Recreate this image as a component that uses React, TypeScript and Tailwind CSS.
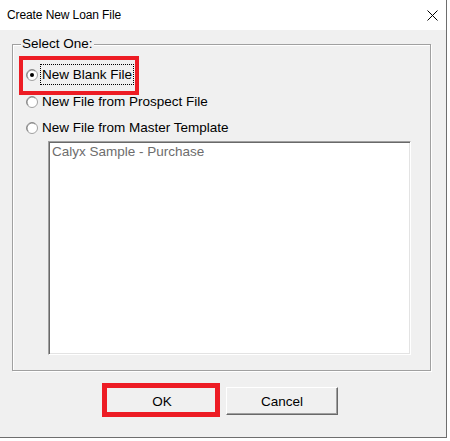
const Radio = ({ checked }: { checked?: boolean }) => (
  <svg width="12" height="12" viewBox="0 0 12 12" className="shrink-0">
    <circle cx="6" cy="6" r="5.5" fill="#ffffff" stroke="#a0a0a0" />
    <path d="M2.2 9.2A4.6 4.6 0 0 1 2.6 2.6 4.6 4.6 0 0 1 9.2 2.2" fill="none" stroke="#696969" strokeWidth="0.8" />
    {checked && <circle cx="6" cy="6" r="2" fill="#000000" />}
  </svg>
);

const App = () => {
  return (
    <div className="w-[450px] h-[441px] bg-white font-['Liberation_Sans',Arial,sans-serif] text-black">
      <div className="w-[447px] h-[438px] bg-[#f0f0f0] border-r border-b border-[#6e6e6e] flex flex-col">
        {/* Title bar */}
        <div className="h-[30px] bg-white flex items-center justify-between pl-[7px] pr-[8px] shrink-0">
          <span className="text-[12px] leading-[14px] tracking-[-0.1px]">Create New Loan File</span>
          <svg width="11" height="11" viewBox="0 0 11 11">
            <path d="M0.5 0.5L10.5 10.5M10.5 0.5L0.5 10.5" stroke="#000" strokeWidth="1" />
          </svg>
        </div>

        {/* Group box */}
        <div className="relative ml-[12px] mt-[14px] w-[419px] h-[327px] border border-[#a0a0a0] shadow-[inset_1px_1px_0_#ffffff,1px_1px_0_#ffffff] flex flex-col pt-[16px]">
          <span className="absolute -top-[9px] left-[8px] px-[1px] bg-[#f0f0f0] text-[13.5px] leading-[15px]">
            Select One:
          </span>

          <div className="relative h-[27px] flex items-center pl-[13px] gap-[2px]">
            <Radio checked />
            <span className="text-[13.5px] leading-[19px] px-[1px] border border-dotted border-black">New Blank File</span>
            <div className="absolute left-[6px] -top-[5px] w-[120px] h-[39px] border-4 border-[#ed1c24]" />
          </div>
          <div className="h-[27px] flex items-center pl-[13px] gap-[2px]">
            <Radio />
            <span className="text-[13.5px] leading-[19px] px-[1px] border border-transparent">New File from Prospect File</span>
          </div>
          <div className="h-[25px] flex items-center pl-[13px] gap-[2px]">
            <Radio />
            <span className="text-[13.5px] leading-[19px] px-[1px] border border-transparent">New File from Master Template</span>
          </div>

          {/* List box */}
          <div className="ml-[35px] mt-[1px] w-[363px] h-[214px] bg-white border border-t-[#a0a0a0] border-l-[#a0a0a0] border-r-white border-b-white shadow-[inset_1px_1px_0_#696969,inset_-1px_-1px_0_#e3e3e3] pt-[2px] pl-[3px]">
            <div className="text-[13.5px] leading-[15px] text-[#6d6d6d]">Calyx Sample - Purchase</div>
          </div>
        </div>

        {/* Buttons */}
        <div className="flex mt-[16px] ml-[106px] gap-[8px]">
          <div className="relative">
            <button className="w-[112px] h-[28px] bg-[#f0f0f0] border border-t-white border-l-white border-r-[#696969] border-b-[#696969] shadow-[inset_-1px_-1px_0_#a0a0a0] text-[13.5px] leading-[15px]">
              OK
            </button>
            <div className="absolute -left-[4px] -top-[4px] w-[118px] h-[34px] border-[5px] border-[#ed1c24]" />
          </div>
          <button className="w-[112px] h-[28px] bg-[#f0f0f0] border border-t-white border-l-white border-r-[#696969] border-b-[#696969] shadow-[inset_-1px_-1px_0_#a0a0a0] text-[13.5px] leading-[15px]">
            Cancel
          </button>
        </div>
      </div>
    </div>
  );
};

export default App;
